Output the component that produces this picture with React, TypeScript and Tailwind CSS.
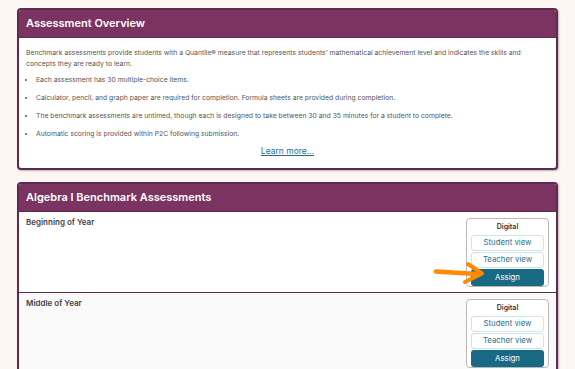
import React from 'react'

const bullets = [
  'Each assessment has 30 multiple-choice items.',
  'Calculator, pencil, and graph paper are required for completion. Formula sheets are provided during completion.',
  'The benchmark assessments are untimed, though each is designed to take between 30 and 35 minutes for a student to complete.',
  'Automatic scoring is provided within P2C following submission.',
]

function Card({ title, children }: { title: string; children: React.ReactNode }) {
  return (
    <div className="mx-[17px] rounded-[4px] border-2 border-[#5f2a4d] bg-white shadow-[1px_1px_2px_rgba(0,0,0,0.25)] overflow-hidden">
      <div className="h-[28px] bg-[#7b3462] border-b border-[#5f2a4d] flex items-center px-[7px]">
        <h2 className="text-white text-[11px] font-semibold">{title}</h2>
      </div>
      {children}
    </div>
  )
}

function Arrow() {
  return (
    <svg className="absolute left-[412px] top-[49px]" width="56" height="26" viewBox="0 0 56 26">
      <path d="M5 10.5 L46 13" stroke="#ff8a00" strokeWidth="4.5" strokeLinecap="round" fill="none" />
      <path d="M37 3 L51 12.5 L34 21" stroke="#ff8a00" strokeWidth="4" strokeLinecap="round" strokeLinejoin="round" fill="none" />
    </svg>
  )
}

function AssessmentRow({ label, shaded, arrow }: { label: string; shaded?: boolean; arrow?: boolean }) {
  return (
    <div className={`relative h-[80px] flex justify-between items-start px-[7px] ${shaded ? 'bg-[#fafafa]' : 'bg-white'}`}>
      <div className="text-[8px] font-semibold text-[#3f3f46] pt-[4px]">{label}</div>
      {arrow && <Arrow />}
      <div className="mt-[6px] w-[83px] h-[69px] rounded-[4px] border border-[#b8b8b8] bg-white flex flex-col items-center px-[4px] pt-[3px]">
        <div className="text-[7px] font-semibold text-[#333] leading-[10px] mb-[3px]">Digital</div>
        <button className="w-full h-[16px] rounded-[3px] border border-[#cfe3ea] text-[#2b6f86] text-[7.8px] leading-none mb-[1px]">
          Student view
        </button>
        <button className="w-full h-[16px] rounded-[3px] border border-[#cfe3ea] text-[#2b6f86] text-[7.8px] leading-none mb-[1px]">
          Teacher view
        </button>
        <button className="w-full h-[17px] rounded-[3px] bg-[#186a84] text-white text-[7.8px] leading-none">
          Assign
        </button>
      </div>
    </div>
  )
}

export default function App() {
  return (
    <div className="w-[575px] h-[369px] overflow-hidden bg-[#fdf7f4] pt-[8px] font-['Inter','Liberation_Sans',sans-serif]">
      <Card title="Assessment Overview">
        <div className="px-[7px] pt-[9px] pb-[11px] text-[6.8px] text-[#555] leading-[11px]">
          <p>
            Benchmark assessments provide students with a Quantile® measure that represents students' mathematical
            achievement level and indicates the skills and concepts they are ready to learn.
          </p>
          <ul className="mt-[5px] flex flex-col gap-[7px] pl-[10px] list-disc marker:text-[#555]">
            {bullets.map((b) => (
              <li key={b}>{b}</li>
            ))}
          </ul>
          <div className="mt-[7px] text-center">
            <a href="#" className="text-[8.5px] text-[#1f6f8b] underline">Learn more...</a>
          </div>
        </div>
      </Card>
      <div className="h-[12px]" />
      <Card title="Algebra I Benchmark Assessments">
        <AssessmentRow label="Beginning of Year" arrow />
        <div className="h-[1px] bg-[#5f2a4d]" />
        <AssessmentRow label="Middle of Year" shaded />
      </Card>
    </div>
  )
}
